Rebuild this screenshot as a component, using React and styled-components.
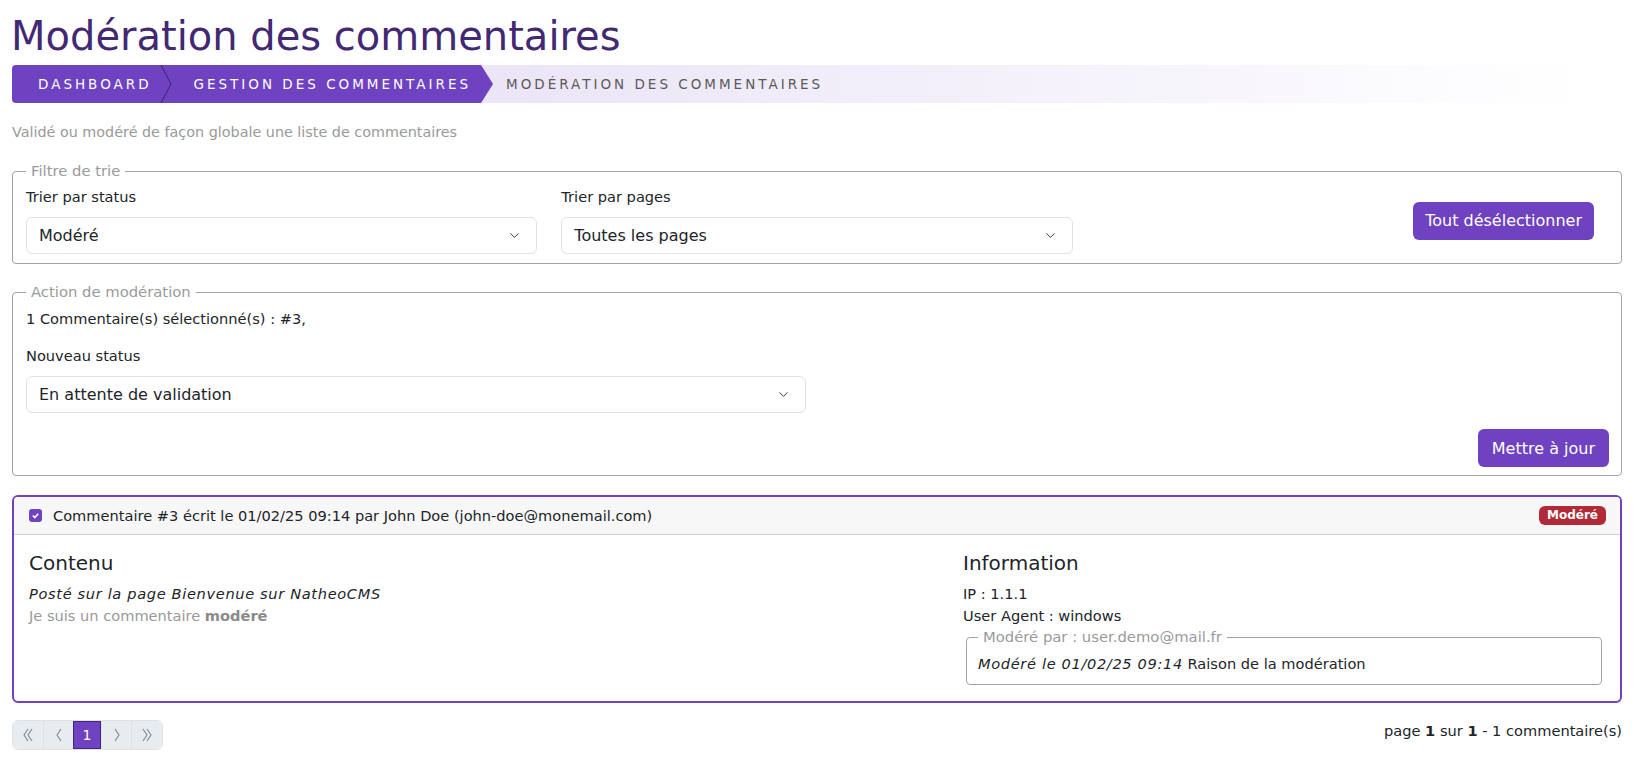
import React from 'react';
import styled, { createGlobalStyle } from 'styled-components';
import { ChevronDown } from 'lucide-react';

const GlobalStyle = createGlobalStyle`
  body {
    margin: 0;
    background: #fff;
    font-family: "DejaVu Sans", Verdana, sans-serif;
    font-size: 14.6px;
    color: #212529;
  }
  * { box-sizing: border-box; }
  i { letter-spacing: 0.65px; }
`;

const Page = styled.div`
  padding: 0 12px;
`;

const Title = styled.h1`
  margin: 13px 0 6px -1px;
  font-size: 40px;
  line-height: 46px;
  font-weight: 400;
  color: #432874;
`;

const Crumbs = styled.nav`
  display: flex;
  align-items: center;
  height: 38px;
  border-radius: 4px 0 0 4px;
  background: linear-gradient(to right, #ebe5f6 30%, #f5f2fb 65%, #ffffff 98%);
`;

const CrumbActive = styled.div`
  display: flex;
  align-items: center;
  height: 100%;
  padding: 0 22px 0 26px;
  background: #6f42c1;
  border-radius: 4px 0 0 4px;
  clip-path: polygon(0 0, calc(100% - 12px) 0, 100% 50%, calc(100% - 12px) 100%, 0 100%);
`;

const CrumbText = styled.span`
  font-size: 13.5px;
  letter-spacing: 3px;
  text-transform: uppercase;
  color: ${(p) => (p.$current ? '#5a5a5a' : '#fff')};
  margin-left: ${(p) => (p.$current ? '13px' : '0')};
`;

const Sep = styled.svg`
  width: 12px;
  height: 38px;
  margin: 0 22px 0 8px;
  flex: none;
`;

const Lead = styled.p`
  margin: 19px 0 19px;
  font-size: 14.35px;
  line-height: 20px;
  color: #999;
`;

const Box = styled.fieldset`
  margin: ${(p) => p.$mt || 0} 0 0;
  padding: ${(p) => p.$pad || '6px 13px 9px'};
  border: 1px solid #a3a3a3;
  border-radius: 4px;
  min-width: 0;
`;

const Legend = styled.legend`
  padding: 0 5px;
  font-size: 14.8px;
  line-height: 20px;
  color: #9a9a9a;
`;

const FilterGrid = styled.div`
  display: grid;
  grid-template-columns: repeat(3, 1fr);
  column-gap: 24px;
  align-items: center;
`;

const HalfGrid = styled.div`
  display: grid;
  grid-template-columns: 1fr 1fr;
  column-gap: 24px;
`;

const Label = styled.div`
  line-height: 20px;
  margin-bottom: 10px;
`;

const Line = styled.div`
  line-height: 20px;
  margin-bottom: ${(p) => p.$mb || 0};
`;

const SelectBox = styled.div`
  display: flex;
  align-items: center;
  justify-content: space-between;
  height: 37px;
  padding: 0 14px 0 12px;
  border: 1px solid #dee2e6;
  border-radius: 6px;
  background: #fff;
  font-size: 16px;
  color: #212529;
  svg { color: #343a40; }
`;

const Button = styled.button`
  height: 38px;
  padding: 0 ${(p) => p.$px || '12px'};
  border: none;
  border-radius: 6px;
  background: #6f42c1;
  color: #fff;
  font-family: "DejaVu Sans", Verdana, sans-serif;
  font-size: 16px;
  margin-right: ${(p) => p.$mr || 0};
`;

const ButtonCell = styled.div`
  display: flex;
  justify-content: flex-end;
  padding-top: ${(p) => p.$pt || 0};
`;

const Card = styled.div`
  margin-top: 19px;
  border: 2px solid #6f42c1;
  border-radius: 6px;
  overflow: hidden;
`;

const CardHead = styled.div`
  display: flex;
  align-items: center;
  height: 38px;
  padding: 0 14px 0 15px;
  background: #f7f7f7;
  border-bottom: 1px solid #d0d0d0;
`;

const Check = styled.span`
  display: inline-flex;
  align-items: center;
  justify-content: center;
  width: 13px;
  height: 13px;
  border-radius: 3px;
  background: #6f42c1;
  margin-right: 11px;
`;

const HeadText = styled.span`
  flex: 1;
`;

const Badge = styled.span`
  padding: 0 8px;
  height: 19px;
  line-height: 19px;
  border-radius: 6px;
  background: #b02a37;
  color: #fff;
  font-size: 12px;
  font-weight: 700;
`;

const CardBody = styled.div`
  display: grid;
  grid-template-columns: 1fr 642px;
  padding: 16px 15px 16px;
`;

const Col = styled.div`
  line-height: 22px;
`;

const SubTitle = styled.h3`
  margin: 0 0 8px;
  font-size: 20px;
  line-height: 24px;
  font-weight: 400;
`;

const Muted = styled.div`
  color: #999;
  b { color: #8a8a8a; }
`;

const Footer = styled.div`
  display: flex;
  justify-content: space-between;
  align-items: flex-start;
  margin-top: 17px;
`;

const Pager = styled.div`
  display: flex;
  border: 1px solid #dee2e6;
  border-radius: 6px;
  overflow: hidden;
`;

const PageBtn = styled.span`
  display: flex;
  align-items: center;
  justify-content: center;
  width: ${(p) => p.$w || 30}px;
  height: 28px;
  background: ${(p) => (p.$active ? '#6f42c1' : '#e9ecef')};
  color: ${(p) => (p.$active ? '#fff' : '#7a8694')};
  border-left: 1px solid ${(p) => (p.$active ? '#432874' : '#dee2e6')};
  border-right: ${(p) => (p.$active ? '1px solid #432874' : 'none')};
  outline: ${(p) => (p.$active ? '1px solid #432874' : 'none')};
  outline-offset: -1px;
  font-size: 14px;
  &:first-child { border-left: none; }
`;

const Summary = styled.div`
  line-height: 22px;
  color: #212529;
`;

const Chev = ({ dir = 'left', double }) => {
  const pts = dir === 'left' ? '6,1 2,7 6,13' : '2,1 6,7 2,13';
  const pts2 = dir === 'left' ? '10,1 6,7 10,13' : '6,1 10,7 6,13';
  return (
    <svg width={double ? 12 : 8} height="14" viewBox={`0 0 ${double ? 12 : 8} 14`} fill="none" stroke="currentColor" strokeWidth="1.1">
      <polyline points={pts} />
      {double && <polyline points={pts2} />}
    </svg>
  );
};

export default function App() {
  return (
    <Page>
      <GlobalStyle />
      <Title>Modération des commentaires</Title>
      <Crumbs>
        <CrumbActive>
          <CrumbText>Dashboard</CrumbText>
          <Sep viewBox="0 0 12 38">
            <polyline points="1,0 11,19 1,38" fill="none" stroke="#3d2470" strokeWidth="1" />
          </Sep>
          <CrumbText>Gestion des commentaires</CrumbText>
        </CrumbActive>
        <CrumbText $current>Modération des commentaires</CrumbText>
      </Crumbs>
      <Lead>Validé ou modéré de façon globale une liste de commentaires</Lead>

      <Box>
        <Legend>Filtre de trie</Legend>
        <FilterGrid>
          <div>
            <Label>Trier par status</Label>
            <SelectBox>
              Modéré <ChevronDown size={15} strokeWidth={1.6} />
            </SelectBox>
          </div>
          <div>
            <Label>Trier par pages</Label>
            <SelectBox>
              Toutes les pages <ChevronDown size={15} strokeWidth={1.6} />
            </SelectBox>
          </div>
          <ButtonCell>
            <Button $mr="14px">Tout désélectionner</Button>
          </ButtonCell>
        </FilterGrid>
      </Box>

      <Box $mt="18px" $pad="7px 12px 8px 13px">
        <Legend>Action de modération</Legend>
        <Line $mb="17px">1 Commentaire(s) sélectionné(s) : #3,</Line>
        <Label>Nouveau status</Label>
        <HalfGrid>
          <SelectBox>
            En attente de validation <ChevronDown size={15} strokeWidth={1.6} />
          </SelectBox>
        </HalfGrid>
        <ButtonCell $pt="16px">
          <Button $px="14px">Mettre à jour</Button>
        </ButtonCell>
      </Box>

      <Card>
        <CardHead>
          <Check>
            <svg width="9" height="9" viewBox="0 0 10 10" fill="none" stroke="#fff" strokeWidth="1.8">
              <polyline points="2,5 4.2,7.2 8,3" />
            </svg>
          </Check>
          <HeadText>Commentaire #3 écrit le 01/02/25 09:14 par John Doe (john-doe@monemail.com)</HeadText>
          <Badge>Modéré</Badge>
        </CardHead>
        <CardBody>
          <Col>
            <SubTitle>Contenu</SubTitle>
            <div><i>Posté sur la page Bienvenue sur NatheoCMS</i></div>
            <Muted>Je suis un commentaire <b>modéré</b></Muted>
          </Col>
          <Col>
            <SubTitle>Information</SubTitle>
            <div>IP : 1.1.1</div>
            <div>User Agent : windows</div>
            <Box $pad="7px 12px 10px 11px" style={{ margin: '0 3px 0 3px' }}>
              <Legend>Modéré par : user.demo@mail.fr</Legend>
              <Line><i>Modéré le 01/02/25 09:14</i> Raison de la modération</Line>
            </Box>
          </Col>
        </CardBody>
      </Card>

      <Footer>
        <Pager>
          <PageBtn><Chev dir="left" double /></PageBtn>
          <PageBtn><Chev dir="left" /></PageBtn>
          <PageBtn $active $w={28}>1</PageBtn>
          <PageBtn><Chev dir="right" /></PageBtn>
          <PageBtn $w={31}><Chev dir="right" double /></PageBtn>
        </Pager>
        <Summary>page <b>1</b> sur <b>1</b> - 1 commentaire(s)</Summary>
      </Footer>
    </Page>
  );
}
